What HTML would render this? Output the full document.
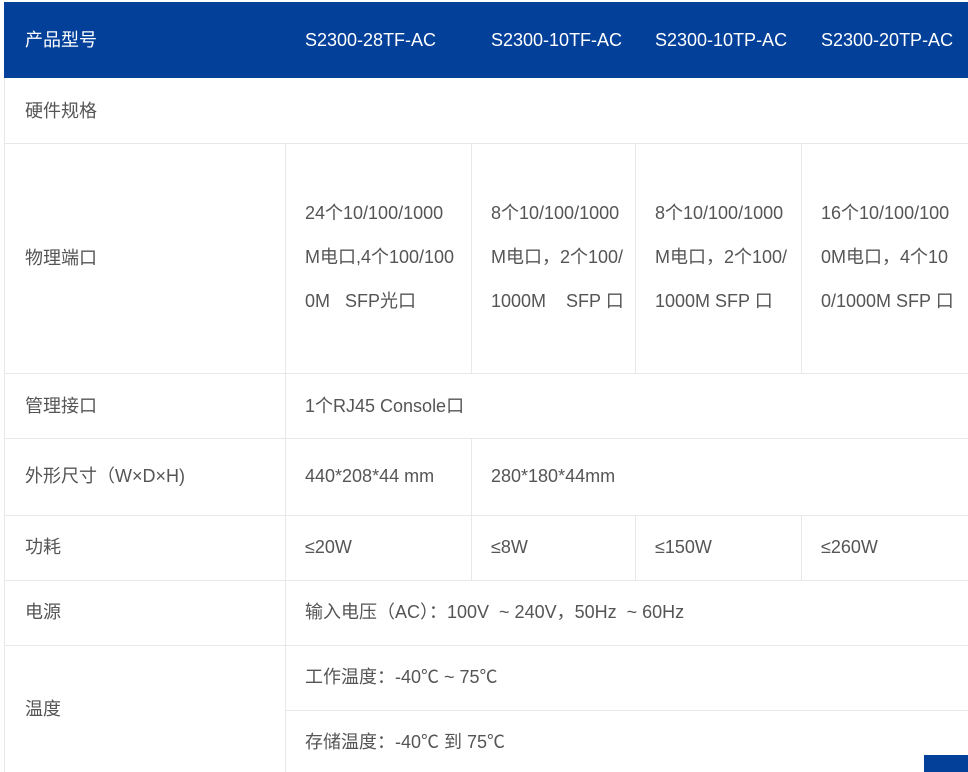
<!DOCTYPE html><html><head><meta charset="utf-8"><style>
body{margin:0;width:968px;height:772px;background:#fff;position:relative;overflow:hidden;font-family:"Liberation Sans","Noto Sans CJK SC",sans-serif;font-size:18px;color:#555}
.h{position:absolute;height:1px;background:#e8e8e8}
.v{position:absolute;width:1px;background:#e8e8e8}
.t{position:absolute;white-space:nowrap;line-height:22px}
.hd{position:absolute;left:4px;top:2px;width:964px;height:76px;background:#02409a}
.w{color:#fff}
</style></head><body>
<div class="hd"></div>
<div class="t w" style="left:25px;top:29px">产品型号</div>
<div class="t w" style="left:305px;top:29px">S2300-28TF-AC</div>
<div class="t w" style="left:491px;top:29px">S2300-10TF-AC</div>
<div class="t w" style="left:655px;top:29px">S2300-10TP-AC</div>
<div class="t w" style="left:821px;top:29px">S2300-20TP-AC</div>

<div class="v" style="left:4px;top:78px;height:694px"></div>
<div class="v" style="left:285px;top:143px;height:629px"></div>
<div class="v" style="left:471px;top:143px;height:230px"></div>
<div class="v" style="left:471px;top:438px;height:142px"></div>
<div class="v" style="left:635px;top:143px;height:230px"></div>
<div class="v" style="left:635px;top:515px;height:65px"></div>
<div class="v" style="left:801px;top:143px;height:230px"></div>
<div class="v" style="left:801px;top:515px;height:65px"></div>

<div class="h" style="left:4px;top:143px;width:964px"></div>
<div class="h" style="left:4px;top:373px;width:964px"></div>
<div class="h" style="left:4px;top:438px;width:964px"></div>
<div class="h" style="left:4px;top:515px;width:964px"></div>
<div class="h" style="left:4px;top:580px;width:964px"></div>
<div class="h" style="left:4px;top:645px;width:964px"></div>
<div class="h" style="left:285px;top:710px;width:683px"></div>

<div class="t" style="left:25px;top:100px">硬件规格</div>
<div class="t" style="left:25px;top:247px">物理端口</div>
<div class="t" style="left:305px;top:202px">24个10/100/1000</div>
<div class="t" style="left:305px;top:246px">M电口,4个100/100</div>
<div class="t" style="left:305px;top:290px">0M &nbsp; SFP光口</div>
<div class="t" style="left:491px;top:202px">8个10/100/1000</div>
<div class="t" style="left:491px;top:246px">M电口，2个100/</div>
<div class="t" style="left:491px;top:290px">1000M &nbsp;&nbsp; SFP 口</div>
<div class="t" style="left:655px;top:202px">8个10/100/1000</div>
<div class="t" style="left:655px;top:246px">M电口，2个100/</div>
<div class="t" style="left:655px;top:290px">1000M SFP 口</div>
<div class="t" style="left:821px;top:202px">16个10/100/100</div>
<div class="t" style="left:821px;top:246px">0M电口，4个10</div>
<div class="t" style="left:821px;top:290px">0/1000M SFP 口</div>

<div class="t" style="left:25px;top:395px">管理接口</div>
<div class="t" style="left:305px;top:395px">1个RJ45 Console口</div>
<div class="t" style="left:25px;top:465px">外形尺寸（W×D×H)</div>
<div class="t" style="left:305px;top:465px">440*208*44 mm</div>
<div class="t" style="left:491px;top:465px">280*180*44mm</div>
<div class="t" style="left:25px;top:536px">功耗</div>
<div class="t" style="left:305px;top:536px">≤20W</div>
<div class="t" style="left:491px;top:536px">≤8W</div>
<div class="t" style="left:655px;top:536px">≤150W</div>
<div class="t" style="left:821px;top:536px">≤260W</div>
<div class="t" style="left:25px;top:601px">电源</div>
<div class="t" style="left:305px;top:601px">输入电压（AC）：100V &nbsp;~ 240V，50Hz &nbsp;~ 60Hz</div>
<div class="t" style="left:25px;top:698px">温度</div>
<div class="t" style="left:305px;top:666px">工作温度：-40℃ ~ 75℃</div>
<div class="t" style="left:305px;top:731px">存储温度：-40℃ 到 75℃</div>
<div style="position:absolute;left:924px;top:755px;width:44px;height:17px;background:#02409a"></div>
</body></html>
